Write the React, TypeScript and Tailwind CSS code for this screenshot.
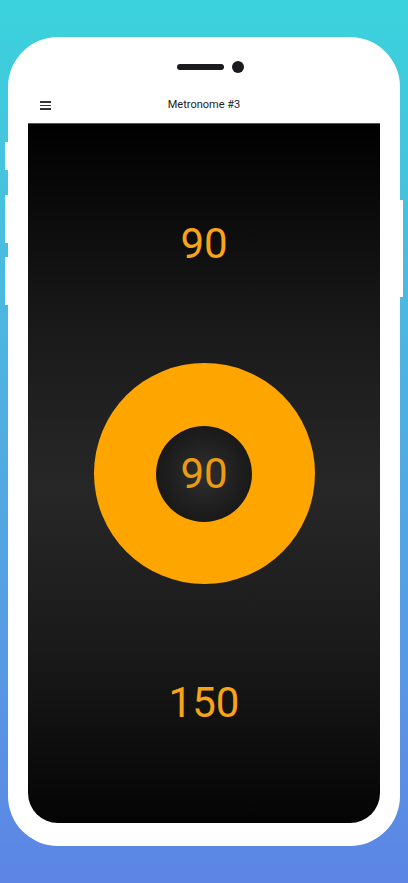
import React from "react";

export default function App() {
  return (
    <div
      className="relative w-[408px] h-[883px] overflow-hidden bg-linear-to-b from-[#3ad2dc] to-[#5c85e5] px-[8px] pt-[37px]"
      style={{ fontFamily: "Roboto, 'Noto Sans', sans-serif" }}
    >
      {/* side buttons */}
      <div className="absolute left-[5px] top-[142px] w-[3px] h-[28px] bg-white" />
      <div className="absolute left-[5px] top-[195px] w-[3px] h-[48px] bg-white" />
      <div className="absolute left-[5px] top-[257px] w-[3px] h-[48px] bg-white" />
      <div className="absolute left-[400px] top-[200px] w-[3px] h-[97px] bg-white" />

      <div className="flex flex-col h-[809px] w-[392px] rounded-[50px] bg-white">
        {/* speaker */}
        <div className="flex items-center justify-center pl-[13px] pt-[24px] h-[36px]">
          <div className="w-[47px] h-[6px] rounded-full bg-[#1b1b1f]" />
          <div className="ml-[8px] w-[12px] h-[12px] rounded-full bg-[#1b1b1f]" />
        </div>
        {/* header */}
        <div className="relative flex items-center justify-center mt-[22px] h-[20px] mb-[8px]">
          <div className="absolute left-[32px] top-[6px] flex flex-col gap-[2px]">
            <div className="w-[11px] h-[1.5px] bg-[#333]" />
            <div className="w-[11px] h-[1.5px] bg-[#333]" />
            <div className="w-[11px] h-[1.5px] bg-[#333]" />
          </div>
          <span className="text-[11px] text-[#222]">Metronome #3</span>
        </div>
        {/* screen */}
        <div className="mx-[20px] mb-[23px] flex-1 rounded-b-[30px] border-t border-[#555] bg-[linear-gradient(to_bottom,#000_0%,#1a1a1a_30%,#272727_52%,#1a1a1a_75%,#040404_100%)] flex flex-col items-center justify-center gap-[94px]">
          <div className="h-[50px] leading-[50px] text-[42px] text-[#f7a417]">90</div>
          <div className="w-[221px] h-[221px] rounded-full bg-[#ffa500] flex items-center justify-center">
            <div className="w-[96px] h-[96px] rounded-full bg-[radial-gradient(circle,#2f2f2f_0%,#1c1c1c_60%,#111_100%)] flex items-center justify-center">
              <span className="text-[42px] leading-none text-[#eb9b12]">90</span>
            </div>
          </div>
          <div className="h-[50px] leading-[50px] text-[42px] text-[#f7a417]">150</div>
        </div>
      </div>
    </div>
  );
}
